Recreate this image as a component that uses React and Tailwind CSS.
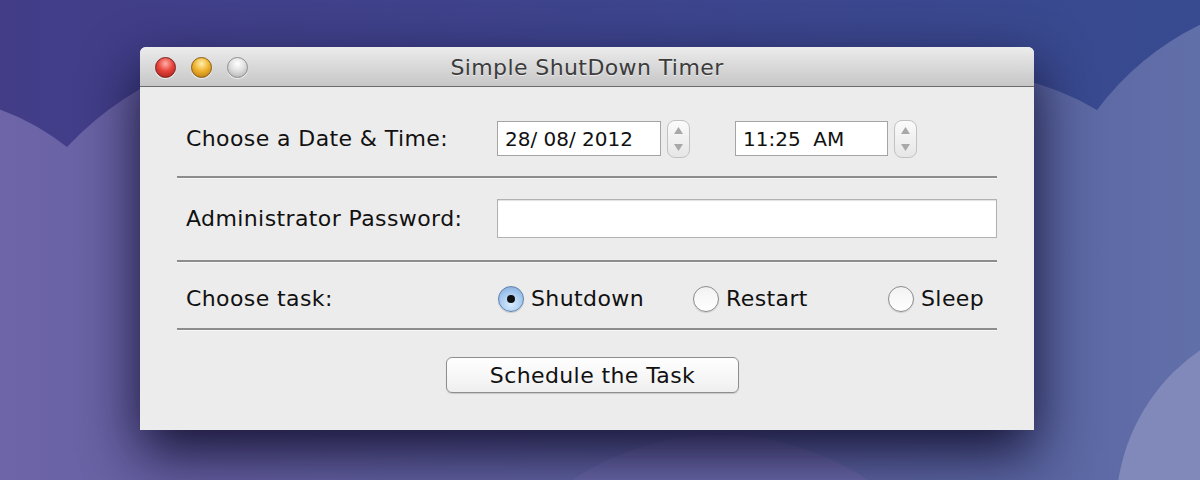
const font = { fontFamily: '"DejaVu Sans", "Noto Sans", sans-serif' };

function Wallpaper() {
  return (
    <svg className="absolute inset-0" width="1200" height="480" viewBox="0 0 1200 480">
      <defs>
        <linearGradient id="sky" x1="0" y1="0" x2="1" y2="0">
          <stop offset="0" stopColor="#433d88" />
          <stop offset="1" stopColor="#384b90" />
        </linearGradient>
        <linearGradient id="cloud" x1="0" y1="0" x2="1" y2="0">
          <stop offset="0" stopColor="#6d65a7" />
          <stop offset="0.15" stopColor="#6660a2" />
          <stop offset="0.85" stopColor="#5b66a2" />
          <stop offset="1" stopColor="#6270aa" />
        </linearGradient>
      </defs>
      <rect width="1200" height="480" fill="url(#sky)" />
      <path d="M -10 106 A 243 243 0 0 1 67 147 A 318 318 0 0 1 190 66 L 990 74 A 277 277 0 0 1 1097 110 A 288 288 0 0 1 1215 18 L 1215 480 L -10 480 Z" fill="url(#cloud)" />
      <circle cx="720" cy="700" r="265" fill="#6a68a8" />
      <circle cx="1310" cy="510" r="194" fill="#8089b9" />
    </svg>
  );
}

function Light({ kind }) {
  const styles = {
    red: "bg-[radial-gradient(circle_at_50%_30%,#ffb0a8_0%,#e8453c_45%,#a01814_100%)] border-[#7a1d18]",
    yellow: "bg-[radial-gradient(circle_at_50%_30%,#fff0b0_0%,#f0b430_45%,#b0700c_100%)] border-[#8a5a10]",
    grey: "bg-[radial-gradient(circle_at_50%_30%,#ffffff_0%,#e0e0e0_45%,#a8a8a8_100%)] border-[#8e8e8e]",
  };
  return <div className={`w-[21px] h-[21px] rounded-full border ${styles[kind]} shadow-[0_1px_1px_rgba(255,255,255,0.8)]`} />;
}

function Stepper() {
  return (
    <div className="w-[23px] h-[38px] rounded-[8px] border border-[#c2c2c2] bg-gradient-to-b from-[#fbfbfb] to-[#e6e6e6] flex flex-col items-center justify-between py-[6px] text-[#a8a8a8]">
      <svg width="9" height="7" viewBox="0 0 9 7"><path d="M4.5 0L9 7H0z" fill="currentColor" /></svg>
      <svg width="9" height="7" viewBox="0 0 9 7"><path d="M0 0h9L4.5 7z" fill="currentColor" /></svg>
    </div>
  );
}

function Radio({ label, checked }) {
  return (
    <div className="w-[195px] flex items-center gap-[7px] pl-[1px]">
      {checked ? (
        <div className="w-[26px] h-[26px] rounded-full border border-[#5f82ad] bg-[radial-gradient(circle_at_50%_70%,#d8ecff_0%,#a6c9ef_55%,#7aa6da_100%)] flex items-center justify-center shadow-[0_1px_1px_rgba(0,0,0,0.15)]">
          <div className="w-[8px] h-[8px] rounded-full bg-[#111]" />
        </div>
      ) : (
        <div className="w-[26px] h-[26px] rounded-full border border-[#8c8c8c] bg-gradient-to-b from-[#f2f2f2] to-[#ffffff] shadow-[0_1px_1px_rgba(0,0,0,0.12)]" />
      )}
      <span className="text-[22px] tracking-[0.4px] text-[#111]">{label}</span>
    </div>
  );
}

function Rule() {
  return <div className="h-[2px] bg-[#8d8d8d] border-b border-[#f6f6f6] box-content" />;
}

export default function App() {
  return (
    <div className="relative w-[1200px] h-[480px] overflow-hidden" style={font}>
      <Wallpaper />
      <div className="relative pl-[140px] pt-[47px]">
        <div className="w-[894px] h-[383px] rounded-t-[6px] bg-[#ececec] shadow-[0_22px_55px_rgba(12,10,40,0.9)] flex flex-col">
          <div className="h-[40px] rounded-t-[6px] bg-gradient-to-b from-[#ececec] to-[#c6c6c6] border-b border-[#6a6a6a] flex items-center relative">
            <div className="absolute left-[15px] top-[10px] flex gap-[15px]">
              <Light kind="red" />
              <Light kind="yellow" />
              <Light kind="grey" />
            </div>
            <div className="flex-1 text-center text-[22px] tracking-[0.4px] text-[#3c3c3c] [text-shadow:0_1px_0_rgba(255,255,255,0.6)] pt-[1px]">
              Simple ShutDown Timer
            </div>
          </div>

          <div className="px-[37px] text-[22px] tracking-[0.4px] text-[#111]">
            <div className="mt-[32px] h-[39px] grid grid-cols-[320px_1fr] items-center">
              <span className="pl-[9px]">Choose a Date &amp; Time:</span>
              <div className="flex items-center">
                <div className="w-[164px] h-[35px] bg-white border border-[#a4a4a4] flex items-center pl-[7px] text-[20px] tracking-normal">
                  28/ 08/ 2012
                </div>
                <div className="ml-[6px]"><Stepper /></div>
                <div className="ml-[45px] w-[153px] h-[35px] bg-white border border-[#a4a4a4] flex items-center pl-[7px] text-[20px] tracking-normal whitespace-pre">
                  11:25  AM
                </div>
                <div className="ml-[6px]"><Stepper /></div>
              </div>
            </div>
            <div className="mt-[18px]"><Rule /></div>

            <div className="mt-[20px] h-[39px] grid grid-cols-[320px_1fr] items-center">
              <span className="pl-[9px]">Administrator Password:</span>
              <div className="h-[39px] bg-white border border-[#b2b2b2] shadow-[inset_0_1px_1px_rgba(0,0,0,0.12)]" />
            </div>
            <div className="mt-[22px]"><Rule /></div>

            <div className="mt-[19px] h-[30px] grid grid-cols-[320px_1fr] items-center">
              <span className="pl-[9px]">Choose task:</span>
              <div className="flex items-center">
                <Radio label="Shutdown" checked />
                <Radio label="Restart" />
                <Radio label="Sleep" />
              </div>
            </div>
            <div className="mt-[16px]"><Rule /></div>

            <div className="mt-[26px] flex">
              <button className="ml-[269px] w-[293px] h-[36px] rounded-[6px] border border-[#8e8e8e] bg-gradient-to-b from-[#ffffff] to-[#efefef] shadow-[0_1px_1px_rgba(0,0,0,0.15)] flex items-center justify-center">
                Schedule the Task
              </button>
            </div>
          </div>
        </div>
      </div>
    </div>
  );
}
